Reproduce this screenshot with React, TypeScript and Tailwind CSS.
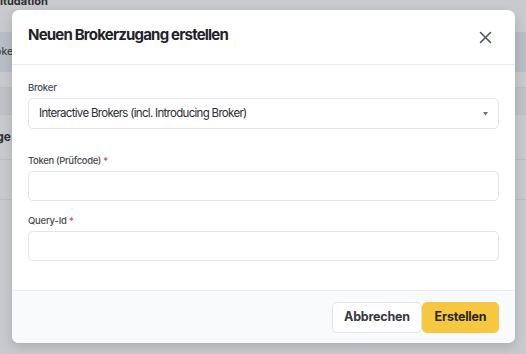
import React from "react";

export default function App() {
  const font = { fontFamily: "Inter, 'Noto Sans', sans-serif" };
  return (
    <div className="relative w-[526px] h-[354px] overflow-hidden bg-[#c9cacd]" style={font}>
      {/* background page (dimmed) */}
      <div className="flex flex-col">
        <div className="h-[32px] -mt-[6px] text-[11px] font-bold text-[#2c2d31] leading-[14px] whitespace-nowrap">
          itudation
        </div>
        <div className="h-[40px] mt-[6px] bg-[#b9bdc6] flex items-center">
          <div className="w-[17px] flex justify-end whitespace-nowrap text-[10.5px] text-[#2c2d31]">Broker</div>
        </div>
        <div className="h-[16px] border-b border-[#bdbec2]"></div>
        <div className="h-[27px] bg-[#c1c2c6] border-b border-[#bdbec2]"></div>
        <div className="h-[45px] flex items-center border-b border-[#bdbec2]">
          <div className="w-[11px] flex justify-end whitespace-nowrap text-[12px] font-bold text-[#2c2d31]">Zugänge</div>
        </div>
        <div className="h-[40px] border-b border-[#bdbec2]"></div>
      </div>

      {/* modal */}
      <div className="absolute left-[12px] top-[10px] w-[503px] h-[333px] bg-white rounded-[7px] shadow-[0_4px_12px_rgba(0,0,0,0.15)] flex flex-col overflow-hidden">
        <div className="h-[55px] flex items-center justify-between pl-[16px] pr-[23px] border-b border-[#eceef2] shrink-0">
          <h2 className="text-[15px] font-bold text-[#1f2229] tracking-[-0.8px] mt-[-3px]">
            Neuen Brokerzugang erstellen
          </h2>
          <svg width="13" height="13" viewBox="0 0 13 13" className="mt-[1px]">
            <path d="M1.5 1.5 L11.5 11.5 M11.5 1.5 L1.5 11.5" stroke="#4b5060" strokeWidth="1.5" strokeLinecap="round" />
          </svg>
        </div>
        <div className="flex-1 px-[16px] pt-[17px] flex flex-col">
          <label className="text-[9.5px] font-medium text-[#464b56] tracking-[-0.2px] leading-[12px]">Broker</label>
          <div className="mt-[4px] h-[31px] border border-[#e3e5ea] rounded-[5px] flex items-center justify-between pl-[10px] pr-[10px] shrink-0">
            <span className="text-[11.5px] text-[#2a2d35] tracking-[-0.7px]">
              Interactive Brokers (incl. Introducing Broker)
            </span>
            <svg width="5" height="4" viewBox="0 0 5 4">
              <path d="M0 0 L5 0 L2.5 3.5 Z" fill="#6b7080" />
            </svg>
          </div>
          <label className="mt-[26px] text-[9.5px] font-medium text-[#464b56] tracking-[-0.35px] leading-[12px]">
            Token (Prüfcode) <span className="text-[#e0464b]">*</span>
          </label>
          <div className="mt-[4px] h-[30px] border border-[#e3e5ea] rounded-[5px] shrink-0"></div>
          <label className="mt-[14px] text-[9.5px] font-medium text-[#464b56] tracking-[-0.2px] leading-[12px]">
            Query-Id <span className="text-[#e0464b]">*</span>
          </label>
          <div className="mt-[4px] h-[30px] border border-[#e3e5ea] rounded-[5px] shrink-0"></div>
        </div>
        <div className="h-[53px] shrink-0 bg-[#f9fafc] border-t border-[#eceef2] flex items-center justify-end pr-[16px]">
          <button className="h-[31px] w-[90px] bg-white border border-[#e1e3e8] rounded-[5px] text-[12.5px] font-bold text-[#353943] tracking-[-0.2px]">
            Abbrechen
          </button>
          <button className="h-[31px] w-[77px] bg-[#f6c842] rounded-[5px] text-[12.5px] font-bold text-[#2a2518] tracking-[-0.2px]">
            Erstellen
          </button>
        </div>
      </div>
    </div>
  );
}
